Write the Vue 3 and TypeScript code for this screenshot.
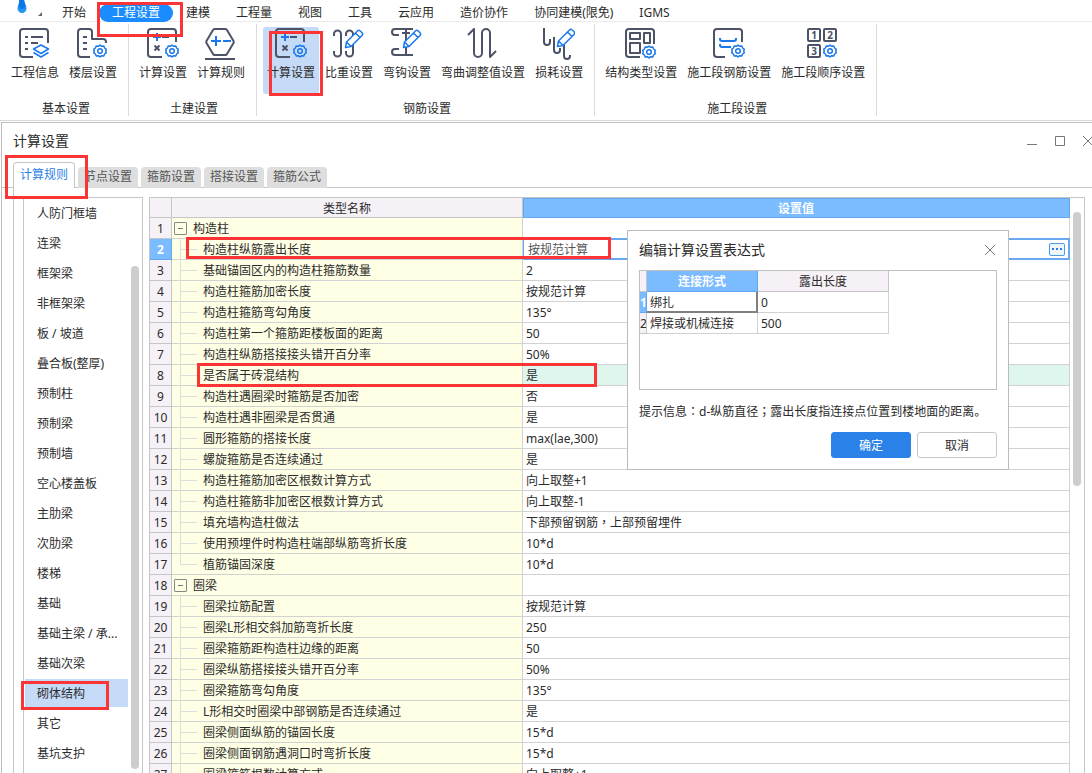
<script setup lang="ts">
import { ref } from 'vue'

interface Tool { label: string; icon: string; active?: boolean }
interface ToolGroup { title: string; tools: Tool[] }
interface Row { name: string; value: string; group?: boolean; last?: boolean }

const menus = ['开始', '工程设置', '建模', '工程量', '视图', '工具', '云应用', '造价协作', '协同建模(限免)', 'IGMS']
const activeMenu = ref('工程设置')

const groups: ToolGroup[] = [
  { title: '基本设置', tools: [{ label: '工程信息', icon: 'info' }, { label: '楼层设置', icon: 'floor' }] },
  { title: '土建设置', tools: [{ label: '计算设置', icon: 'calc' }, { label: '计算规则', icon: 'rule' }] },
  {
    title: '钢筋设置',
    tools: [
      { label: '计算设置', icon: 'calc', active: true },
      { label: '比重设置', icon: 'weight' },
      { label: '弯钩设置', icon: 'hook' },
      { label: '弯曲调整值设置', icon: 'bend' },
      { label: '损耗设置', icon: 'loss' },
    ],
  },
  {
    title: '施工段设置',
    tools: [
      { label: '结构类型设置', icon: 'struct' },
      { label: '施工段钢筋设置', icon: 'stage' },
      { label: '施工段顺序设置', icon: 'order' },
    ],
  },
]

const tabs = ['计算规则', '节点设置', '箍筋设置', '搭接设置', '箍筋公式']
const activeTab = ref('计算规则')

const members = [
  '人防门框墙', '连梁', '框架梁', '非框架梁', '板 / 坡道', '叠合板(整厚)', '预制柱', '预制梁', '预制墙', '空心楼盖板',
  '主肋梁', '次肋梁', '楼梯', '基础', '基础主梁 / 承...', '基础次梁', '砌体结构', '其它', '基坑支护',
]
const activeMember = ref('砌体结构')

const rows: Row[] = [
  { name: '构造柱', value: '', group: true },
  { name: '构造柱纵筋露出长度', value: '按规范计算' },
  { name: '基础锚固区内的构造柱箍筋数量', value: '2' },
  { name: '构造柱箍筋加密长度', value: '按规范计算' },
  { name: '构造柱箍筋弯勾角度', value: '135°' },
  { name: '构造柱第一个箍筋距楼板面的距离', value: '50' },
  { name: '构造柱纵筋搭接接头错开百分率', value: '50%' },
  { name: '是否属于砖混结构', value: '是' },
  { name: '构造柱遇圈梁时箍筋是否加密', value: '否' },
  { name: '构造柱遇非圈梁是否贯通', value: '是' },
  { name: '圆形箍筋的搭接长度', value: 'max(lae,300)' },
  { name: '螺旋箍筋是否连续通过', value: '是' },
  { name: '构造柱箍筋加密区根数计算方式', value: '向上取整+1' },
  { name: '构造柱箍筋非加密区根数计算方式', value: '向上取整-1' },
  { name: '填充墙构造柱做法', value: '下部预留钢筋，上部预留埋件' },
  { name: '使用预埋件时构造柱端部纵筋弯折长度', value: '10*d' },
  { name: '植筋锚固深度', value: '10*d', last: true },
  { name: '圈梁', value: '', group: true },
  { name: '圈梁拉筋配置', value: '按规范计算' },
  { name: '圈梁L形相交斜加筋弯折长度', value: '250' },
  { name: '圈梁箍筋距构造柱边缘的距离', value: '50' },
  { name: '圈梁纵筋搭接接头错开百分率', value: '50%' },
  { name: '圈梁箍筋弯勾角度', value: '135°' },
  { name: 'L形相交时圈梁中部钢筋是否连续通过', value: '是' },
  { name: '圈梁侧面纵筋的锚固长度', value: '15*d' },
  { name: '圈梁侧面钢筋遇洞口时弯折长度', value: '15*d' },
  { name: '圈梁箍筋根数计算方式', value: '向上取整+1' },
]
const editingRow = 1
const tintedRow = 7
</script>

<template>
  <div class="app">
    <svg class="defs" aria-hidden="true">
      <symbol id="gear" viewBox="0 0 14 14">
        <path class="b" d="M7 1l1.600 1.300 2.200-.3.8 2 1.800 1.300-.7 1.700.7 1.700-1.800 1.300-.8 2-2.200-.3L7 13l-1.600-1.300-2.200.3-.8-2L.6 8.700l.7-1.700-.7-1.700L2.400 4l.8-2 2.200.3z" />
        <circle class="b" cx="7" cy="7" r="2.300" />
      </symbol>
      <symbol id="pencil" viewBox="0 0 20 20">
        <path class="b w" d="M1.500 18.500l1-5.500L13.500 2a2 2 0 0 1 2.800 0l1.700 1.700a2 2 0 0 1 0 2.800L7 17.500zM11.500 4l4.500 4.500M2.500 13L7 17.500" />
      </symbol>
      <symbol id="info" viewBox="0 0 32 32">
        <path class="d" d="M14 29H4a3 3 0 0 1-3-3V4a3 3 0 0 1 3-3h22a3 3 0 0 1 3 3v11" />
        <path class="d" d="M6 9h3M6 15h3M6 21h3M12 9h12M12 15h7" />
        <path class="b" d="M22 17l7.500 4-7.500 4.500-7.500-4.500zM14.500 24.500L22 29l7.500-4.500" />
      </symbol>
      <symbol id="floor" viewBox="0 0 32 32">
        <path class="d" d="M13 29H4a3 3 0 0 1-3-3V4a3 3 0 0 1 3-3h8a3 3 0 0 1 3 3v7h11a3 3 0 0 1 3 3v1M6 9h4M6 15h4M6 21h4" />
        <use href="#gear" x="16" y="16" width="14" height="14" />
      </symbol>
      <symbol id="calc" viewBox="0 0 32 32">
        <path class="d" d="M15 29H4a3 3 0 0 1-3-3V4a3 3 0 0 1 3-3h22a3 3 0 0 1 3 3v10M15 9h7M7.500 17.500l5 5M12.500 17.500l-5 5" />
        <path class="b t" d="M6 9h8M10 5v8" />
        <use href="#gear" x="18" y="16" width="14" height="14" />
      </symbol>
      <symbol id="rule" viewBox="0 0 32 32">
        <path class="d" d="M9.500 1h11q1 0 1.500 1l6.500 11q.5 1 0 2L22 26q-.5 1-1.500 1h-11Q8.500 27 8 26L1.500 15q-.5-1 0-2L8 2q.5-1 1.500-1zM0 31h30" />
        <path class="b t" d="M6 13h10M11 8v10M18 13h8" />
      </symbol>
      <symbol id="weight" viewBox="0 0 32 32">
        <path class="d" d="M1 8V6a3.500 3.500 0 0 1 7 0v19a3.500 3.500 0 0 1-7 0v-2M13 8V6a3.500 3.500 0 0 1 7 0v19a3.500 3.500 0 0 1-7 0v-2" />
        <use href="#pencil" x="11" y="1" width="20" height="20" />
      </symbol>
      <symbol id="hook" viewBox="0 0 32 32">
        <path class="d" d="M22 1H4a3 3 0 0 0 0 6h4M15 1v26M11 5h8M22 27H4a3 3 0 0 1 0-6h4" />
        <use href="#pencil" x="11" y="1" width="20" height="20" />
      </symbol>
      <symbol id="bend" viewBox="0 0 32 32">
        <path class="d" d="M1 7l6-6v24a4 4 0 0 0 8 0V5a4 4 0 0 1 8 0v24l6-6" />
      </symbol>
      <symbol id="loss" viewBox="0 0 32 32">
        <path class="d" d="M1 0v14a3 3 0 0 0 6 0v-3M11 9v13a3 3 0 0 0 6 0v-2M21 16v12a3 3 0 0 0 6 0v-1" />
        <use href="#pencil" x="13" y="0" width="20" height="20" />
      </symbol>
      <symbol id="struct" viewBox="0 0 32 32">
        <path class="d" d="M15 29H4a3 3 0 0 1-3-3V4a3 3 0 0 1 3-3h22a3 3 0 0 1 3 3v12M5 5h10v6H5zM19 5h6v10h-6zM5 15h10v10H5z" />
        <use href="#gear" x="17" y="17" width="14" height="14" />
      </symbol>
      <symbol id="stage" viewBox="0 0 32 32">
        <path class="d" d="M12 29H4a3 3 0 0 1-3-3V4a3 3 0 0 1 3-3h22a3 3 0 0 1 3 3v10" />
        <path class="b t" d="M7 10v1q0 2 2 2h12q2 0 2-2v-1M7 16v1q0 2 2 2h9" />
        <use href="#gear" x="18" y="16" width="14" height="14" />
      </symbol>
      <symbol id="order" viewBox="0 0 32 32">
        <path class="d" d="M2 1h10q1 0 1 1v10q0 1-1 1H2q-1 0-1-1V2q0-1 1-1zM18 1h10q1 0 1 1v10q0 1-1 1H18q-1 0-1-1V2q0-1 1-1zM2 17h10q1 0 1 1v10q0 1-1 1H2q-1 0-1-1V18q0-1 1-1z" />
        <text class="n" x="7" y="11">1</text>
        <text class="n" x="23" y="11">2</text>
        <text class="n" x="7" y="27">3</text>
        <use href="#gear" x="16" y="16" width="14" height="14" />
      </symbol>
    </svg>

    <nav class="menu">
      <div class="brand">
        <svg width="10" height="14" viewBox="0 0 10 14" aria-hidden="true">
          <path fill="#2196f3" d="M3 0h4c.5 2.500 2.500 5 2.500 8.500a4.500 4.500 0 0 1-9 0C.5 5 2.500 2.500 3 0z" />
          <path fill="#0f76e6" d="M2 0h5c.5 2 1 4 1 6a3 3 0 0 1-6 0z" />
        </svg>
        <svg class="corner" width="4" height="4" viewBox="0 0 4 4" aria-hidden="true"><path fill="#666" d="M4 0v4H0z" /></svg>
      </div>
      <button v-for="m in menus" :key="m" class="menu-item" :class="{ active: m === activeMenu }" @click="activeMenu = m">{{ m }}</button>
    </nav>

    <header class="ribbon">
      <section v-for="g in groups" :key="g.title" class="group">
        <div class="tools">
          <button v-for="t in g.tools" :key="t.label" class="tool" :class="{ active: t.active }">
            <svg class="icon" width="32" height="32" aria-hidden="true"><use :href="'#' + t.icon" /></svg>
            <span>{{ t.label }}</span>
          </button>
        </div>
        <div class="group-title">{{ g.title }}</div>
      </section>
    </header>

    <main class="window">
      <div class="titlebar">
        <h1>计算设置</h1>
        <div class="controls">
          <button aria-label="最小化"><svg width="10" height="12"><path d="M0 9.500h10" /></svg></button>
          <button aria-label="最大化"><svg width="10" height="12"><path d="M.5 1.500h9v9h-9z" /></svg></button>
          <button aria-label="关闭"><svg width="10" height="12"><path d="M0 1l10 10M10 1L0 11" /></svg></button>
        </div>
      </div>

      <div class="tabs" role="tablist">
        <button v-for="t in tabs" :key="t" role="tab" class="tab" :class="{ active: t === activeTab }" :aria-selected="t === activeTab" @click="activeTab = t">{{ t }}</button>
      </div>

      <div class="panel">
        <aside class="side">
          <ul>
            <li v-for="m in members" :key="m">
              <button class="member" :class="{ active: m === activeMember }" @click="activeMember = m">{{ m }}</button>
            </li>
          </ul>
          <div class="bar"></div>
        </aside>

        <div class="grid">
          <table class="sheet">
            <colgroup><col class="c-no" /><col class="c-name" /><col /></colgroup>
            <thead>
              <tr><th></th><th>类型名称</th><th class="hot">设置值</th></tr>
            </thead>
            <tbody>
              <tr v-for="(r, i) in rows" :key="i">
                <th :class="{ hot: i === editingRow }">{{ i + 1 }}</th>
                <td class="name">
                  <div class="cell" :class="{ parent: r.group, child: !r.group, last: r.last }">
                    <button v-if="r.group" class="toggle" aria-label="折叠"></button>
                    <span>{{ r.name }}</span>
                  </div>
                </td>
                <td class="value" :class="{ editing: i === editingRow, tinted: i === tintedRow }">
                  <div class="cell">
                    <span>{{ r.value }}</span>
                    <button v-if="i === editingRow" class="more" aria-label="更多"><i></i><i></i><i></i></button>
                  </div>
                </td>
              </tr>
            </tbody>
          </table>
          <div class="bar"></div>
        </div>
      </div>
    </main>

    <div class="dialog" role="dialog" aria-labelledby="dlg-title">
      <div class="dialog-head">
        <h2 id="dlg-title">编辑计算设置表达式</h2>
        <button class="close" aria-label="关闭"><svg width="12" height="12"><path d="M1 1l10 10M11 1L1 11" /></svg></button>
      </div>
      <div class="box">
        <table class="mini">
          <colgroup><col class="m-no" /><col class="m-type" /><col class="m-len" /></colgroup>
          <thead><tr><th></th><th class="hot">连接形式</th><th>露出长度</th></tr></thead>
          <tbody>
            <tr><th class="hot">1</th><td class="current">绑扎</td><td>0</td></tr>
            <tr><th>2</th><td>焊接或机械连接</td><td>500</td></tr>
          </tbody>
        </table>
      </div>
      <p>提示信息<span class="mid">：</span>d-纵筋直径<span class="mid">；</span>露出长度指连接点位置到楼地面的距离。</p>
      <div class="actions">
        <button class="ok">确定</button>
        <button class="cancel">取消</button>
      </div>
    </div>

    <div class="mark mark-menu"></div>
    <div class="mark mark-tool"></div>
    <div class="mark mark-tab"></div>
    <div class="mark mark-row-a"></div>
    <div class="mark mark-row-b"></div>
    <div class="mark mark-member"></div>
  </div>
</template>

<style>
body { background: #fff; overflow: hidden; }
</style>

<style scoped>
* { box-sizing: border-box; }
.app {
  position: relative; display: flex; flex-direction: column; height: 100vh; overflow: hidden;
  font: 12px/18px "Noto Sans", "Noto Sans CJK SC", sans-serif; color: #2b2b2b;
}
button { font: inherit; color: inherit; border: 0; padding: 0; margin: 0; background: none; white-space: nowrap; }
svg { display: block; }
h1, h2, p, ul { margin: 0; padding: 0; font-weight: 400; list-style: none; }
.defs { display: none; }
.d, .b { fill: none; stroke-width: 2; stroke-linecap: butt; stroke-linejoin: round; }
.d { stroke: #4d5367; }
.b { stroke: #1a78ec; stroke-width: 1.5; }
.b.t { stroke-width: 2; }
.b.w { fill: #fff; }
.n { font: bold 10px "Noto Sans", sans-serif; fill: #4d5367; text-anchor: middle; }

/* Full-width punctuation centred in its em box */
.mid, .value { font-family: "Noto Sans", "Noto Sans CJK TC", sans-serif; }

.menu { flex: none; display: flex; align-items: flex-end; height: 22px; box-shadow: inset 0 -1px #ececec; }
.brand { display: flex; width: 49px; height: 22px; padding-left: 17px; }
.corner { margin: 12px 0 0 11px; }
.menu-item { height: 18px; padding: 0 13px; line-height: 18px; border-radius: 9px; }
.menu-item.active { background: #1a8cff; color: #fff; }

.ribbon { flex: none; display: flex; padding: 2px 0 4px; border-bottom: 1px solid #d9d9d9; }
.group { padding: 3px 6px 0 5px; border-right: 1px solid #dcdcdc; }
.group:first-child { padding-left: 6px; }
.tools { display: flex; }
.tool { display: flex; flex-direction: column; align-items: center; justify-content: flex-start; height: 67px; margin: 0 1px; padding: 1px 4px 0; border-radius: 3px; }
.tool.active { background: #c5daf7; }
.icon { margin-bottom: 4px; overflow: visible; }
.group-title { margin-top: 8px; padding-left: 4px; line-height: 14px; text-align: center; }

.window { flex: 1; min-height: 0; display: flex; flex-direction: column; margin: 1px 0 0 1px; border: 1px solid #bdbdbd; border-width: 1px 0 0 1px; }
.titlebar { flex: none; display: flex; justify-content: space-between; align-items: center; height: 36px; padding-left: 11px; }
h1, h2 { font-size: 14px; line-height: 20px; }
.controls { display: flex; gap: 18px; margin-right: -1px; }
.controls path, .close path { fill: none; stroke: #777; stroke-width: 1; }
.tabs { flex: none; display: flex; align-items: flex-end; gap: 3px; height: 29px; padding-left: 11px; box-shadow: inset 0 -1px #c6c6c6; }
.tab { width: 60px; height: 21px; padding-bottom: 2px; color: #555; background: #dedede; border-radius: 4px 4px 0 0; }
.tab.active { width: 62px; height: 26px; color: #2a80e8; background: #fff; border: 1px solid #c6c6c6; border-bottom: 0; }
.panel { flex: 1; min-height: 0; display: flex; gap: 6px; margin-left: 11px; padding: 9px 7px 0 9px; border-left: 1px solid #c6c6c6; }
.side { flex: none; display: flex; justify-content: space-between; width: 120px; padding: 1px 3px 0 1px; border: 1px solid #c6c6c6; border-bottom: 0; }
.side ul { width: 103px; }
.side li { padding-bottom: 2px; }
.member { display: block; width: 100%; height: 28px; padding: 2px 0 0 12px; text-align: left; }
.member.active { background: #c5daf7; }
.bar { flex: none; width: 8px; border-radius: 4px; background: #cdcdcd; }
.side .bar { height: 503px; margin-top: 67px; }
.grid { flex: 1; min-width: 0; display: flex; gap: 3px; padding-right: 3px; overflow: hidden; border: 1px solid #c6c6c6; border-bottom: 0; }
.grid .bar { height: 274px; margin-top: 14px; }

table { border-collapse: separate; border-spacing: 0; table-layout: fixed; }
th, td { height: 21px; padding: 0; border: 1px solid #d2d2d2; border-width: 0 1px 1px 0; white-space: nowrap; }
th { padding-top: 2px; line-height: 18px; font-weight: 400; background: #f6f1f6; border-color: #c6c6c6; }
.hot { font-weight: 700; color: #fff; background: #7abcff; border-color: #64a6ee; }
.sheet { flex: 1; align-self: flex-start; min-width: 0; }
.sheet thead th { height: 20px; line-height: 17px; }
.sheet thead .hot { box-shadow: inset 1px 1px #64a6ee; }
.c-no { width: 22px; }
.c-name { width: 351px; }
.name { background: #ffffe6; }
.cell { position: relative; display: flex; align-items: center; height: 20px; }
.cell span { padding-top: 2px; line-height: 18px; }
.parent { gap: 6px; padding-left: 2px; }
.child { padding-left: 31px; }
.child::before { content: ""; position: absolute; left: 8px; top: 0; width: 1px; height: 21px; background: #dedee0; }
.child::after { content: ""; position: absolute; left: 8px; top: 10px; width: 17px; height: 1px; background: #dedee0; }
.child.last::before { height: 10px; }
.toggle { width: 13px; height: 13px; border: 1px solid #888; border-radius: 1px; background: linear-gradient(#777, #777) center / 5px 1px no-repeat; }
.value .cell { justify-content: space-between; padding: 0 4px 0 3px; }
.tinted { background: #def6ed; }
.editing { color: #555; border-color: #67a8f0; box-shadow: inset 1px 1px #67a8f0, inset -1px -1px #67a8f0, 0 -1px #67a8f0; }
.value.editing .cell { padding-left: 5px; }
.more { display: flex; justify-content: center; align-items: center; gap: 2px; width: 16px; height: 13px; border: 1px solid #4a9cf0; border-radius: 2px; background: #eef5fd; }
.more i { width: 2px; height: 2px; background: #2a80e8; }

.dialog { position: absolute; left: 627px; top: 230px; width: 382px; padding: 9px 11px 11px; background: #fff; border: 1px solid #bbb; }
.dialog-head { display: flex; justify-content: space-between; align-items: center; height: 20px; padding-right: 1px; }
.box { height: 120px; margin-top: 10px; border: 1px solid #c0c0c0; }
.mini { width: 249px; }
.m-no { width: 7px; }
.m-type { width: 111px; }
.m-len { width: 131px; }
.mini tbody th { overflow: hidden; }
.mini td { padding: 2px 0 0 3px; line-height: 18px; }
.mini .current { border-color: #808080; box-shadow: inset -1px -1px #808080; }
.dialog p { margin-top: 13px; line-height: 18px; white-space: nowrap; }
.actions { display: flex; justify-content: flex-end; gap: 6px; margin-top: 11px; }
.actions button { width: 80px; height: 26px; padding-top: 2px; border: 1px solid #c8c8c8; border-radius: 3px; }
.actions .ok { color: #fff; background: #2a82e8; border-color: #2a82e8; }

.mark { position: absolute; border: 3px solid #fb3535; pointer-events: none; }
.mark-menu { left: 97px; top: 2px; width: 86px; height: 35px; }
.mark-tool { left: 269px; top: 31px; width: 54px; height: 65px; }
.mark-tab { left: 5px; top: 155px; width: 83px; height: 44px; }
.mark-row-a { left: 186px; top: 237px; width: 425px; height: 22px; }
.mark-row-b { left: 197px; top: 363px; width: 400px; height: 24px; }
.mark-member { left: 21px; top: 681px; width: 88px; height: 29px; }
</style>
